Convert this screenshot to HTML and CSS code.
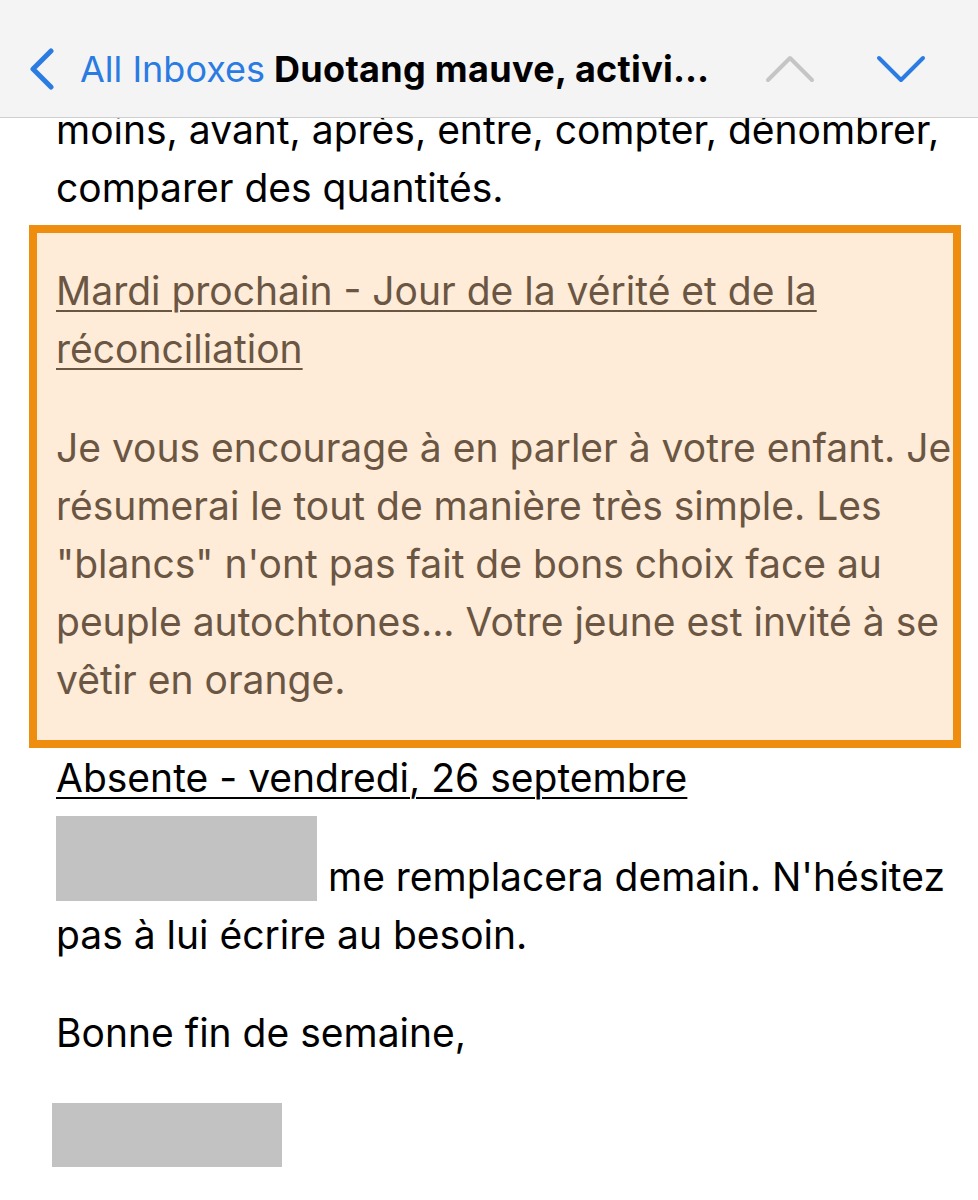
FILE: index.html
```html
<!DOCTYPE html>
<html lang="fr">
<head>
<meta charset="utf-8">
<title>Duotang mauve</title>
<link rel="stylesheet" href="styles.css">
</head>
<body>
<header class="navbar">
  <div class="nav-left">
    <svg class="back-chev" width="26" height="42" viewBox="0 0 26 42"><polyline points="22,3 4,21 22,39" fill="none" stroke="#2a7be2" stroke-width="5" stroke-linecap="round" stroke-linejoin="round"/></svg>
    <span class="back-label">All Inboxes</span>
    <span class="subject">Duotang mauve, activi…</span>
  </div>
  <div class="nav-right">
    <svg class="nav-chev" width="50" height="30" viewBox="0 0 50 30"><polyline points="3,26 25,4 47,26" fill="none" stroke="#c5c5c5" stroke-width="4" stroke-linecap="round" stroke-linejoin="round"/></svg>
    <svg class="nav-chev" width="50" height="30" viewBox="0 0 50 30"><polyline points="3,4 25,26 47,4" fill="none" stroke="#2a7be2" stroke-width="4" stroke-linecap="round" stroke-linejoin="round"/></svg>
  </div>
</header>

<main class="mail">
  <p class="text intro">moins, avant, après, entre, compter, dénombrer, comparer des quantités.</p>

  <section class="notice">
    <p class="notice-title"><u>Mardi prochain - Jour de la vérité et de la réconciliation</u></p>
    <p class="notice-body">Je vous encourage à en parler à votre enfant. Je résumerai le tout de manière très simple. Les "blancs" n'ont pas fait de bons choix face au peuple autochtones... Votre jeune est invité à se vêtir en orange.</p>
  </section>

  <p class="text absent"><u>Absente - vendredi, 26 septembre</u></p>
  <p class="text replace"><span class="redact redact-name"></span> me remplacera demain. N'hésitez pas à lui écrire au besoin.</p>
  <p class="text closing">Bonne fin de semaine,</p>
  <div class="redact redact-sign"></div>
</main>
</body>
</html>
```

FILE: styles.css
```css
html, body {
  margin: 0;
  padding: 0;
  background: #ffffff;
}

body {
  font-family: Inter, "Noto Sans", "Liberation Sans", sans-serif;
  width: 978px;
  height: 1200px;
  overflow: hidden;
}

.navbar {
  position: fixed;
  top: 0;
  left: 0;
  width: 978px;
  height: 118px;
  box-sizing: border-box;
  padding-top: 21px;
  background: #f4f4f4;
  border-bottom: 1px solid #cfcfcf;
  display: flex;
  align-items: center;
  justify-content: space-between;
  z-index: 2;
}

.nav-left {
  display: flex;
  align-items: center;
  padding-left: 29px;
}

.back-chev {
  margin-right: 25px;
}

.back-label {
  color: #2a7be2;
  font-size: 36px;
  margin-right: 9px;
}

.subject {
  color: #000;
  font-size: 36px;
  font-weight: 700;
  letter-spacing: 0.3px;
}

.nav-right {
  display: flex;
  align-items: center;
  gap: 61px;
  padding-right: 52px;
}

.mail {
  padding: 101px 17px 0 29px;
}

.text {
  margin: 0;
  padding: 0 14px 0 27px;
  font-size: 39px;
  line-height: 58px;
  color: #000;
}

.notice {
  margin-top: 8px;
  border: 8px solid #ef8e0e;
  background: #feebd8;
  padding: 29px 0 31px 19px;
  color: #6a5642;
  font-size: 39px;
  line-height: 58px;
}

.notice p {
  margin: 0;
}

.notice-body {
  margin-top: 41px !important;
}

u {
  text-decoration-thickness: 2px;
  text-underline-offset: 5px;
}

.absent {
  margin-top: 1px;
}

.replace {
  margin-top: 9px;
}

.redact {
  background: #c2c2c2;
}

.redact-name {
  display: inline-block;
  width: 261px;
  height: 85px;
  vertical-align: -10px;
}

.closing {
  margin-top: 40px;
}

.redact-sign {
  width: 230px;
  height: 64px;
  margin: 41px 0 0 23px;
}
```
